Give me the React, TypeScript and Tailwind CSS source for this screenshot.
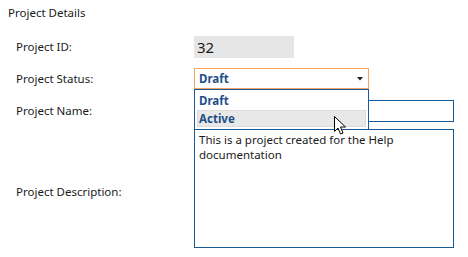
export default function App() {
  return (
    <div className="h-[257px] w-[468px] bg-white text-[11.5px] text-[#1a1a1a] [font-family:'Noto_Sans',sans-serif]">
      <div className="px-2 pt-[5px] leading-[16px]">Project Details</div>

      <div className="mt-[15px] flex items-center">
        <div className="w-[194px] pl-4">Project ID:</div>
        <div className="flex h-[22px] w-[100px] items-center bg-[#e6e6e6] pl-[3px] text-[15px]">32</div>
      </div>

      <div className="relative mt-[10px] flex items-center">
        <div className="w-[194px] pl-4">Project Status:</div>
        <div className="flex h-[21px] w-[175px] items-center justify-between border border-[#f5a55e] pl-[4px] pr-[5px] font-bold text-[#1f4f8a]">
          <span>Draft</span>
          <svg width="6" height="4" viewBox="0 0 6 4">
            <path d="M0 0h6L3 3.5z" fill="#222" />
          </svg>
        </div>

        <div className="absolute left-[194px] top-[21px] z-10 w-[175px] border border-[#19599a] bg-white p-[2px] font-bold text-[#1f4f8a]">
          <div className="flex h-[18px] items-center pl-[2px]">Draft</div>
          <div className="flex h-[17px] items-center border border-[#dcdcdc] bg-[#e8e8e8] pl-[1px]">Active</div>
          <svg className="absolute left-[139px] top-[26px]" width="13" height="20" viewBox="0 0 13 20">
            <path d="M0.5 0.5v15l3.5-3.5 2.5 6 2.5-1-2.5-6h5z" fill="#fff" stroke="#000" strokeWidth="1" strokeLinejoin="round" />
          </svg>
        </div>
      </div>

      <div className="mt-[11px] flex items-center">
        <div className="w-[194px] pl-4">Project Name:</div>
        <div className="h-[22px] w-[260px] border border-[#19599a]" />
      </div>

      <div className="mt-[7px] flex items-center">
        <div className="w-[194px] pl-4 pt-[7px]">Project Description:</div>
        <div className="h-[119px] w-[260px] border border-[#19599a] px-[4px] pt-[2px] leading-[15px]">
          This is a project created for the Help documentation
        </div>
      </div>
    </div>
  );
}
